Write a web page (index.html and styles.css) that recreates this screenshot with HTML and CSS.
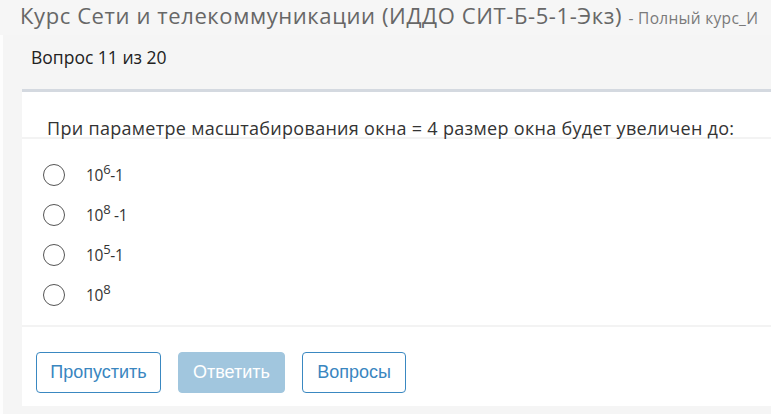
FILE: index.html
```html
<!DOCTYPE html>
<html lang="ru">
<head>
<meta charset="utf-8">
<title>Вопрос 11 из 20</title>
<link rel="stylesheet" href="styles.css">
</head>
<body>
<header class="top">
  <h1 class="course">Курс Сети и телекоммуникации (ИДДО СИТ-Б-5-1-Экз) <small class="course-sub">- Полный курс_И</small></h1>
</header>
<main class="main">
  <div class="counter">Вопрос 11 из 20</div>
  <section class="card">
    <div class="question">При параметре масштабирования окна = 4 размер окна будет увеличен до:</div>
    <ul class="options">
      <li class="option"><span class="radio"></span><span class="label">10<sup>6</sup>-1</span></li>
      <li class="option"><span class="radio"></span><span class="label">10<sup>8</sup> -1</span></li>
      <li class="option"><span class="radio"></span><span class="label">10<sup>5</sup>-1</span></li>
      <li class="option"><span class="radio"></span><span class="label">10<sup>8</sup></span></li>
    </ul>
    <div class="actions">
      <button class="btn btn-outline btn-skip">Пропустить</button>
      <button class="btn btn-solid">Ответить</button>
      <button class="btn btn-outline btn-list">Вопросы</button>
    </div>
  </section>
</main>
</body>
</html>
```

FILE: styles.css
```css
html, body {
  margin: 0;
  padding: 0;
}
body {
  background: #f6f6f6;
  font-family: "Open Sans", "Noto Sans", sans-serif;
  color: #333;
  width: 771px;
  height: 414px;
  overflow: hidden;
}
.top {
  height: 35px;
  padding-left: 20px;
  white-space: nowrap;
}
.course {
  margin: 0;
  font-weight: 400;
  font-size: 22px;
  line-height: 30px;
  margin-top: 0;
  color: #676767;
  letter-spacing: 0.6px;
}
.course-sub {
  font-size: 15.5px;
  color: #7a7a7a;
  letter-spacing: 0.3px;
}
.main {
  border-left: 3px solid #fdfdfd;
  padding-left: 19px;
  background: #f5f5f5;
  height: 379px;
}
.counter {
  font-size: 17.5px;
  line-height: 22px;
  padding: 11px 0 0 9px;
  height: 43px;
  box-sizing: border-box;
  color: #222;
}
.card {
  background: #fff;
  border-top: 3px solid #d4d9e0;
  margin-top: 11px;
}
.question {
  padding: 25px 0 0 25px;
  height: 47px;
  box-sizing: border-box;
  font-size: 18px;
  line-height: 22px;
  color: #333;
  letter-spacing: 0.3px;
  border-bottom: 2px solid #f3f3f3;
  white-space: nowrap;
}
.options {
  list-style: none;
  margin: 0;
  padding: 16px 0 10px 21px;
  border-bottom: 2px solid #f3f3f3;
}
.option {
  display: flex;
  align-items: center;
  height: 40px;
}
.radio {
  width: 20px;
  height: 20px;
  border: 1.5px solid #555;
  border-radius: 50%;
  flex: none;
}
.label {
  margin-left: 21px;
  font-size: 15.5px;
  color: #333;
  letter-spacing: -0.3px;
}
.label sup {
  font-size: 13px;
  vertical-align: 7px;
  line-height: 0;
}
.actions {
  display: flex;
  gap: 17px;
  padding: 25px 0 13px 14px;
}
.btn {
  height: 41px;
  border-radius: 4px;
  font-family: "Liberation Sans", Arial, sans-serif;
  font-size: 18px;
  padding: 0;
  box-sizing: border-box;
}
.btn-outline {
  background: #fff;
  border: 1px solid #3a88c1;
  color: #3a86bf;
}
.btn-skip { width: 125px; }
.btn-list { width: 104px; }
.btn-solid {
  width: 107px;
  background: #a1c6de;
  border: 1px solid #a1c6de;
  color: #fff;
}
```
